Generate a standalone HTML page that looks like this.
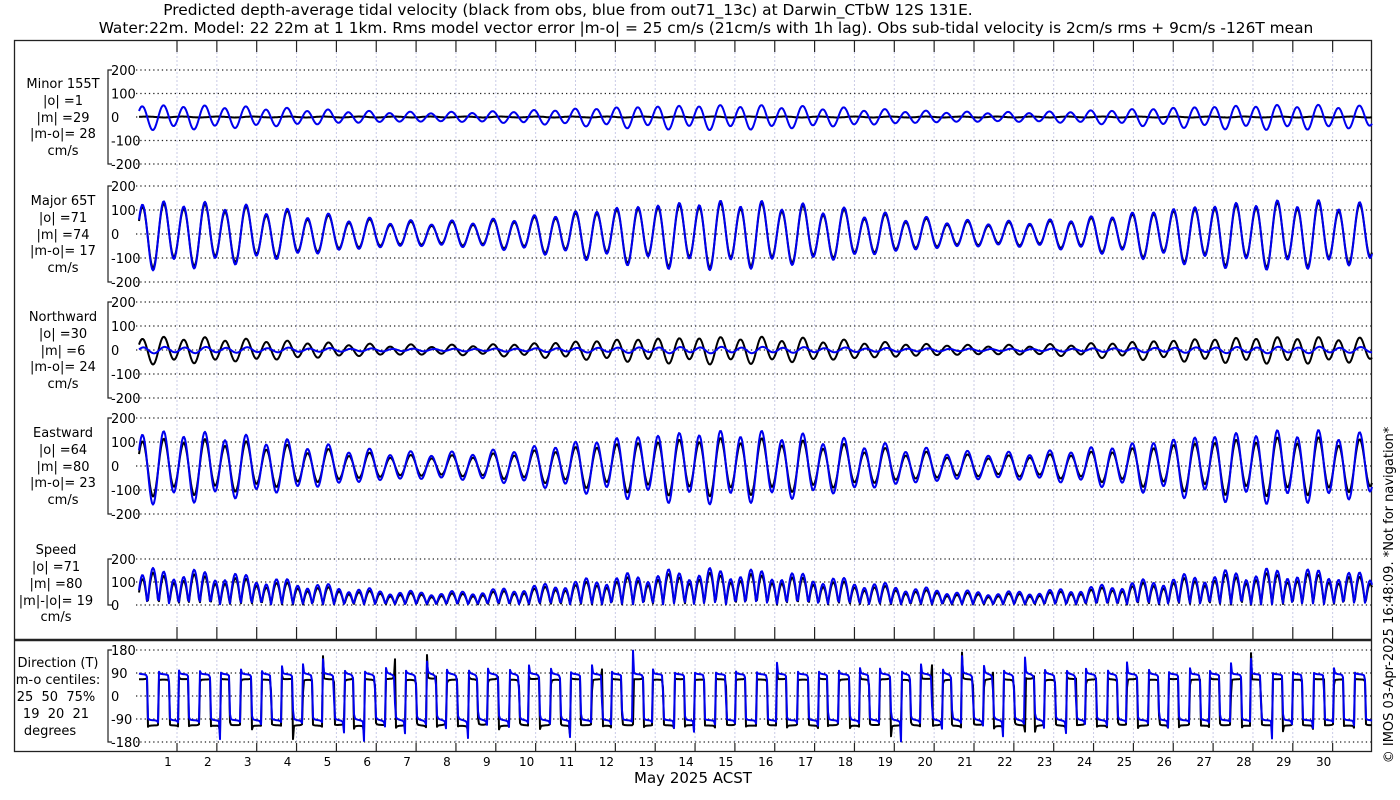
<!DOCTYPE html>
<html><head><meta charset="utf-8"><style>
html,body{margin:0;padding:0;background:#fff;width:1400px;height:800px;overflow:hidden}
svg{display:block;font-family:"DejaVu Sans","Liberation Sans",sans-serif}
</style></head><body>
<svg id="s" width="1400" height="800" viewBox="0 0 1400 800" xmlns="http://www.w3.org/2000/svg">
<text x="568" y="15" font-size="15.4" text-anchor="middle">Predicted depth-average tidal velocity (black from obs, blue from out71_13c) at Darwin_CTbW 12S 131E.</text>
<text x="706" y="33" font-size="15.4" text-anchor="middle">Water:22m. Model: 22 22m at 1 1km. Rms model vector error |m-o| = 25 cm/s (21cm/s with 1h lag). Obs sub-tidal velocity is 2cm/s rms + 9cm/s -126T mean</text>
<rect x="14.5" y="40.5" width="1357" height="711" fill="none" stroke="#222" stroke-width="1.3"/>
<line x1="14" y1="640" x2="1371" y2="640" stroke="#222" stroke-width="2.5"/>
<g id="grid"></g>
<g id="data"></g>
<g font-size="13" text-anchor="middle">
<text x="63" y="88">Minor 155T</text><text x="63" y="105">|o| =1</text><text x="63" y="122">|m| =29</text><text x="63" y="138">|m-o|= 28</text><text x="63" y="155">cm/s</text>
<text x="63" y="205">Major 65T</text><text x="63" y="222">|o| =71</text><text x="63" y="239">|m| =74</text><text x="63" y="255">|m-o|= 17</text><text x="63" y="272">cm/s</text>
<text x="63" y="321">Northward</text><text x="63" y="338">|o| =30</text><text x="63" y="355">|m| =6</text><text x="63" y="371">|m-o|= 24</text><text x="63" y="388">cm/s</text>
<text x="63" y="437">Eastward</text><text x="63" y="454">|o| =64</text><text x="63" y="471">|m| =80</text><text x="63" y="487">|m-o|= 23</text><text x="63" y="504">cm/s</text>
<text x="56" y="554">Speed</text><text x="56" y="571">|o| =71</text><text x="56" y="588">|m| =80</text><text x="56" y="605">|m|-|o|= 19</text><text x="56" y="621">cm/s</text>
<text x="58" y="667">Direction (T)</text><text x="58" y="684">m-o centiles:</text><text x="56" y="701" xml:space="preserve">25  50  75%</text><text x="56" y="718" xml:space="preserve">19  20  21</text><text x="50" y="735">degrees</text>
</g>
<text x="693" y="783" font-size="15" text-anchor="middle">May 2025 ACST</text>
<text transform="translate(1393,595) rotate(-90)" font-size="13" text-anchor="middle">© IMOS 03-Apr-2025 16:48:09. *Not for navigation*</text>
</svg>
<script>
(function(){
var NS="http://www.w3.org/2000/svg";
var grid=document.getElementById('grid'),data=document.getElementById('data');
function el(p,n,a,t){var e=document.createElementNS(NS,n);for(var k in a)e.setAttribute(k,a[k]);if(t!=null)e.textContent=t;p.appendChild(e);return e;}
var X0=139,X1=1372,DX=39.85,L0=177;
for(var k=0;k<30;k++){var x=L0+k*DX;if(x>1371)break;
 el(grid,'line',{x1:x,y1:52,x2:x,y2:627,stroke:'#c9cbe6','stroke-width':1,'stroke-dasharray':'2,2'});
 el(grid,'line',{x1:x,y1:652,x2:x,y2:743,stroke:'#c9cbe6','stroke-width':1,'stroke-dasharray':'2,2'});
 el(grid,'line',{x1:x,y1:40,x2:x,y2:52,stroke:'#222','stroke-width':1.2});
 el(grid,'line',{x1:x,y1:627,x2:x,y2:640,stroke:'#222','stroke-width':1.2});
 el(grid,'line',{x1:x,y1:743,x2:x,y2:752,stroke:'#222','stroke-width':1.2});
}
for(var d=1;d<=30;d++){el(grid,'text',{x:168+(d-1)*DX,y:766,'font-size':12,'text-anchor':'middle'},String(d));}
var panels=[{z:117,s:0.235,ticks:[200,100,0,-100,-200]},{z:234,s:0.24,ticks:[200,100,0,-100,-200]},{z:350,s:0.24,ticks:[200,100,0,-100,-200]},{z:466,s:0.24,ticks:[200,100,0,-100,-200]},{z:605,s:0.23,ticks:[200,100,0]},{z:696,s:23/90,ticks:[180,90,0,-90,-180]}];
panels.forEach(function(p){
 var top=p.z-p.ticks[0]*p.s,bot=p.z-p.ticks[p.ticks.length-1]*p.s;
 el(grid,'path',{d:'M112,'+top+'H108V'+bot+'H112',fill:'none',stroke:'#222','stroke-width':1.2});
 p.ticks.forEach(function(v){var y=p.z-v*p.s;
  el(grid,'line',{x1:136,y1:y,x2:1371,y2:y,stroke:'#222','stroke-width':1.2,'stroke-dasharray':'1.3,3'});
  el(grid,'text',{x:111,y:y+5,'font-size':13},String(v));});
});
function sig(x){
 var t=(x-X0)/DX;
 var A=80+38*Math.cos(2*Math.PI*(t-0.3)/14.2);
 var ph=2*Math.PI*t*24/12.42+0.4;
 var D=0.2*A*Math.cos(2*Math.PI*t*24/23.93+1.2);
 return {maj:A*Math.sin(ph)+D,t:t,ph:ph};
}
var series={ob:{maj:[],min:[],n:[],e:[],sp:[],dir:[]},md:{maj:[],min:[],n:[],e:[],sp:[],dir:[]}};
var c65=Math.cos(65*Math.PI/180),s65=Math.sin(65*Math.PI/180),c155=Math.cos(155*Math.PI/180),s155=Math.sin(155*Math.PI/180);
var xs=[];
for(var x=X0;x<=X1;x+=1){xs.push(x);var g=sig(x);
 var mo=g.maj, mi=2*Math.sin(g.ph*0.5+g.t);
 var mm=g.maj*1.05+4*Math.sin(g.ph+0.3), mn=0.36*mm+4*Math.sin(g.ph+1.3);
 [[series.ob,mo,mi],[series.md,mm,mn]].forEach(function(a){var S=a[0],M=a[1],m=a[2];
  var n=M*c65+m*c155,e=M*s65+m*s155;
  S.maj.push(M);S.min.push(m);S.n.push(n);S.e.push(e);S.sp.push(Math.sqrt(n*n+e*e));
  S.dir.push(Math.atan2(e,n)*180/Math.PI);});
}
function path(arr,p,clamp){var d='';for(var i=0;i<arr.length;i++){var v=Math.max(-clamp,Math.min(clamp,arr[i]));
 d+=(i?'L':'M')+xs[i]+','+(p.z-v*p.s).toFixed(1);}return d;}
['min','maj','n','e','sp','dir'].forEach(function(k,i){
 el(data,'path',{d:path(series.ob[k],panels[i],k=='dir'?180:220),fill:'none',stroke:'#000','stroke-width':2,'stroke-linejoin':'round'});
 el(data,'path',{d:path(series.md[k],panels[i],k=='dir'?180:220),fill:'none',stroke:'#0000ee','stroke-width':2,'stroke-linejoin':'round'});
});
})();
</script>
</body></html>
